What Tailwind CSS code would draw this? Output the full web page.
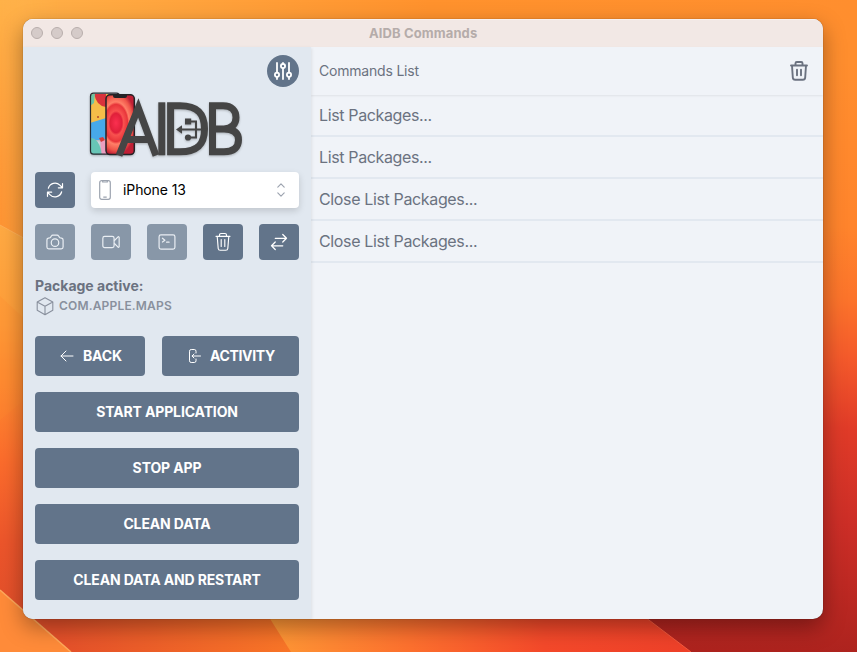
<!DOCTYPE html>
<html lang="en"><head><meta charset="utf-8"><title>AIDB Commands</title>
<script src="https://cdn.jsdelivr.net/npm/@tailwindcss/browser@4"></script></head>
<body class="relative h-[652px] w-[857px] overflow-hidden bg-[#ff8c2c] font-['Inter','Liberation_Sans',sans-serif]">
<!-- wallpaper -->
<svg class="absolute inset-0" width="857" height="652" viewBox="0 0 857 652">
<defs>
<linearGradient id="top" x1="0" y1="0" x2="1" y2="0"><stop offset="0" stop-color="#ffb149"/><stop offset=".5" stop-color="#ff922d"/><stop offset="1" stop-color="#ff8e2e"/></linearGradient>
<linearGradient id="left" x1="0" y1="0" x2="0" y2="1"><stop offset="0" stop-color="#ffb149"/><stop offset=".5" stop-color="#ff9a38"/><stop offset="1" stop-color="#ff8a2c"/></linearGradient>
<linearGradient id="fade" x1="0" y1="0" x2="1" y2="0"><stop offset="0" stop-color="#fff"/><stop offset="1" stop-color="#000"/></linearGradient>
<mask id="leftMask"><rect width="60" height="330" fill="url(#fade)"/></mask>
<linearGradient id="left2" gradientUnits="userSpaceOnUse" x1="0" y1="225" x2="0" y2="600"><stop offset="0" stop-color="#ffaa43"/><stop offset=".25" stop-color="#ff9e39"/><stop offset=".42" stop-color="#ff8a30"/><stop offset=".62" stop-color="#fc6d2c"/><stop offset=".85" stop-color="#ec552b"/><stop offset="1" stop-color="#e4502a"/></linearGradient>
<linearGradient id="right" gradientUnits="userSpaceOnUse" x1="820" y1="60" x2="794" y2="652"><stop offset="0" stop-color="#ff8e2e"/><stop offset=".28" stop-color="#ff842c"/><stop offset=".4" stop-color="#fc742b"/><stop offset=".5" stop-color="#f45a2b"/><stop offset=".62" stop-color="#e03b28"/><stop offset=".78" stop-color="#cc2e27"/><stop offset="1" stop-color="#ad231e"/></linearGradient>
<linearGradient id="b1" x1="0" y1="0" x2="1" y2="0"><stop offset="0" stop-color="#e4502a"/><stop offset=".2" stop-color="#e4502a"/><stop offset="1" stop-color="#fa7727"/></linearGradient>
<linearGradient id="b2" x1="0" y1="0" x2="1" y2="0"><stop offset="0" stop-color="#ff9c36"/><stop offset=".35" stop-color="#fd702e"/><stop offset=".65" stop-color="#f4492a"/><stop offset="1" stop-color="#ee4029"/></linearGradient>
<linearGradient id="b3" x1="0" y1="0" x2="0" y2="1"><stop offset="0" stop-color="#b92621"/><stop offset="1" stop-color="#ad231e"/></linearGradient>
</defs>
<rect width="857" height="652" fill="url(#top)"/>
<path d="M0 0H60V330H0Z" fill="url(#left)" mask="url(#leftMask)"/>
<path d="M0 225L60 258V600H0Z" fill="url(#left2)"/>
<path d="M0 225L60 258" stroke="#ffb765" stroke-opacity=".6"/>
<path d="M0 296L60 352V370L0 420Z" fill="#ff8c2f" fill-opacity=".25"/>
<path d="M780 60H857V652H780Z" fill="url(#right)"/>
<path d="M0 600H300V652H0Z" fill="url(#b1)"/>
<path d="M255 595L291 652H700V595Z" fill="url(#b2)"/>
<path d="M620 598L691 652H810V598Z" fill="url(#b3)"/>
<path d="M620 598L691 652" stroke="#f45a3d"/>
<path d="M0 590L71 652H0Z" fill="#ff8b39"/><path d="M0 590L71 652" stroke="#ffa95b" stroke-width="1.5"/>
</svg>
<main class="absolute left-[23px] top-[19px] flex h-[600px] w-[800px] flex-col overflow-hidden rounded-[10px] bg-[#f0f3f8] shadow-[0_0_1px_rgba(0,0,0,.6),0_8px_22px_rgba(0,0,0,.35)]">
<header class="grid h-7 shrink-0 grid-cols-[1fr_auto_1fr] items-center border-t border-[#f8f1ef] bg-[#f2e8e5] px-2 pb-px">
<div class="flex gap-2"><i class="size-3 rounded-full border border-[#b8aeac] bg-[#d5cbc9]"></i><i class="size-3 rounded-full border border-[#b8aeac] bg-[#d5cbc9]"></i><i class="size-3 rounded-full border border-[#b8aeac] bg-[#d5cbc9]"></i></div>
<h1 class="w-[108px] whitespace-nowrap pb-px text-center text-[13px] leading-4 tracking-[.11px] font-bold text-[#b5acaa]">AIDB Commands</h1>
</header>
<div class="flex min-h-0 flex-1">
<aside class="z-10 flex w-72 shrink-0 flex-col bg-[#e1e8f0] px-3 pt-2 shadow-[1px_1px_3px_rgba(0,0,0,.08)]">
<button class="flex size-8 items-center justify-center self-end rounded-full bg-[#62748a] text-white">
<svg width="20" height="20" viewBox="0 0 20 20" fill="none" stroke="currentColor" stroke-width="1.8" stroke-linecap="round"><path d="M4 2v9.7M4 16v2M10 2v1M10 7.3V18M16 2v9.7M16 16v2"/><circle cx="4" cy="13.8" r="2.1"/><circle cx="10" cy="5.1" r="2.1"/><circle cx="16" cy="13.8" r="2.1"/></svg></button>
<svg class="mt-1 ml-[53px] h-[68px] w-[158px] shrink-0 drop-shadow-[0_1px_1px_rgba(0,0,0,.25)]" viewBox="88 91 158 68">
<defs><clipPath id="p1"><rect x="90.6" y="94" width="28" height="60.5" rx="3"/></clipPath><radialGradient id="p2" gradientUnits="userSpaceOnUse" cx="0" cy="0" r="1" gradientTransform="translate(116 123) scale(20 32)"><stop offset="0" stop-color="#fb3050"/><stop offset=".3" stop-color="#e0203a"/><stop offset=".38" stop-color="#f8524f"/><stop offset=".58" stop-color="#e8353a"/><stop offset=".66" stop-color="#ff8068"/><stop offset=".85" stop-color="#f0564a"/><stop offset="1" stop-color="#c01f35"/></radialGradient></defs>
<g clip-path="url(#p1)"><path fill="#f5bd49" d="M90 93h30v30H90z"/><path fill="#d9323c" d="M94 93h12v14q-10-1-12-14"/><path fill="#6bc3a4" d="M90 93h5l-1 10-4 3z"/><path fill="#47a9e9" d="M90 123l16-5v22H90z"/><path fill="#68c5b6" d="M90 138q9-1 12 17H90z"/><path fill="#eb9fc1" d="M100 139h8v17h-6z"/><circle cx="98" cy="117" r="1" fill="#b54929"/><path fill="#d23d3c" d="M99 138l4-1 2 3-4 2z"/></g>
<rect x="90.5" y="93.2" width="29" height="61" rx="3" fill="none" stroke="#292b31" stroke-width="1.2"/>
<rect x="106" y="94.8" width="28.3" height="59.8" rx="4" fill="url(#p2)" stroke="#242226" stroke-width="1.5"/><path d="M113 95h14v1q0 2-2 2h-10q-2 0-2-2z" fill="#242226"/>
<g fill="none" stroke="#454545" stroke-width="7"><path d="M119 155.5L138.3 108L156 155.5M125 139.5H151" stroke-linejoin="miter"/><path d="M161.8 102.3V155.3"/><path d="M170.6 105.8V151.8H180C199 151.8 204.5 143 204.5 129S199 105.8 180 105.8H170.6Z"/><path d="M212.5 105.8V151.8H224C234.5 151.8 238.5 146.5 238.5 140S234.5 129 224 129H213M224 129C232 128.5 236 124 236 117.5S232 105.8 223 105.8H209M209 151.8H224"/></g>
<g fill="none" stroke="#454545" stroke-width="2"><path d="M181 129.5H207M188 121.5H196V129.5M188 137.5H196V129.5"/></g><g fill="#454545"><path d="M176 129.5l6-4.2v8.4z"/><path d="M185 118.5h6.2v6H185z"/><circle cx="188" cy="137.5" r="3.1"/></g>
</svg>
<div class="mt-[13px] flex h-9 shrink-0 gap-4">
<button class="flex w-10 items-center justify-center rounded-[4px] bg-[#62748a] text-white"><svg width="20" height="20" viewBox="0 0 24 24" fill="none" stroke="currentColor" stroke-width="1.45" stroke-linecap="round" stroke-linejoin="round"><path d="M16.023 9.348h4.992V4.356M2.985 19.644v-4.992h4.992m-4.992 0 3.181 3.183a8.25 8.25 0 0 0 13.803-3.7M4.031 9.865a8.25 8.25 0 0 1 13.803-3.7l3.181 3.182"/></svg></button>
<div class="flex flex-1 items-center rounded-[4px] bg-white shadow-[0_3px_7px_rgba(0,0,0,.15)]">
<svg class="ml-2" width="12" height="20" viewBox="0 0 12 20" fill="none" stroke="#9ca3af" stroke-width="1.2"><rect x=".7" y=".7" width="10.6" height="18.6" rx="2"/><path d="M3.7 1v1h4.6V1M4.3 17.2h3.4"/></svg>
<span class="ml-3 w-[63px] whitespace-nowrap text-[14px] leading-5 tracking-[-.1px] text-black">iPhone 13</span>
<svg class="ml-auto mr-2" width="20" height="20" viewBox="0 0 20 20" fill="none" stroke="#9ca3af" stroke-width="1.15" stroke-linecap="round" stroke-linejoin="round"><path d="m6.8 7.2 3.2-3.3 3.2 3.3M6.8 12.8l3.2 3.3 3.2-3.3"/></svg></div></div>
<div class="mt-4 flex h-9 shrink-0 justify-between text-white">
<button class="flex w-10 items-center justify-center rounded-[4px] bg-[#8897a8]"><svg width="20" height="20" viewBox="0 0 24 24" fill="none" stroke="#e9eef3" stroke-width="1.45" stroke-linejoin="round"><path d="M6.8 6.2A2.3 2.3 0 0 1 5.2 7.2l-1.2.2a2.2 2.2 0 0 0-1.7 2.2V18a2.2 2.2 0 0 0 2.2 2.2h15a2.2 2.2 0 0 0 2.2-2.2V9.6a2.2 2.2 0 0 0-1.8-2.2l-1.1-.2a2.3 2.3 0 0 1-1.6-1l-.9-1.4a2.2 2.2 0 0 0-1.7-1 49 49 0 0 0-5.2 0 2.2 2.2 0 0 0-1.7 1z"/><circle cx="12" cy="12.8" r="4.5"/><path d="M18.5 10.5h.1"/></svg></button>
<button class="flex w-10 items-center justify-center rounded-[4px] bg-[#8897a8]"><svg width="20" height="20" viewBox="0 0 24 24" fill="none" stroke="#e9eef3" stroke-width="1.45" stroke-linejoin="round"><path d="m15.8 10.5 4.7-4.7a.8.8 0 0 1 1.3.5v11.4a.8.8 0 0 1-1.3.5l-4.7-4.7"/><rect x="2.2" y="5.2" width="13.5" height="13.5" rx="2.2"/></svg></button>
<button class="flex w-10 items-center justify-center rounded-[4px] bg-[#8897a8]"><svg width="20" height="20" viewBox="0 0 24 24" fill="none" stroke="#e9eef3" stroke-width="1.45" stroke-linecap="round" stroke-linejoin="round"><rect x="2.5" y="3.5" width="19" height="17" rx="2.2"/><path d="m6.5 7.5 3 2.3-3 2.2M11.5 12.2h3"/></svg></button>
<button class="flex w-10 items-center justify-center rounded-[4px] bg-[#62748a]"><svg width="20" height="20" viewBox="0 0 20 20" fill="none" stroke="currentColor" stroke-width="1.15" stroke-linecap="round" stroke-linejoin="round"><path d="M3 4.3h14M4.2 4.3l1 12.2q.2 1.7 2 1.7h5.6q1.8 0 2-1.7l1-12.2M6.5 4V3q0-1.5 1.5-1.5h4q1.5 0 1.5 1.5v1M8.2 7.5v7M11.8 7.5v7"/></svg></button>
<button class="flex w-10 items-center justify-center rounded-[4px] bg-[#62748a]"><svg width="20" height="20" viewBox="0 0 24 24" fill="none" stroke="currentColor" stroke-width="1.5" stroke-linecap="round" stroke-linejoin="round"><path d="M7.5 21 3 16.5m0 0L7.5 12M3 16.5h13.5m0-13.5L21 7.5m0 0L16.5 12M21 7.5H7.5"/></svg></button>
</div>
<section class="mt-4 h-[44px] shrink-0"><h2 class="text-[14px] leading-5 font-bold text-[#6b7280]"><span class="inline-block w-[109px] whitespace-nowrap">Package active:</span></h2>
<div class="flex items-center gap-1 text-[12px] leading-5 font-semibold tracking-[.18px] text-[#89909d]"><svg width="20" height="20" viewBox="0 0 20 20" fill="none" stroke="#89909d" stroke-width="1.1" stroke-linejoin="round"><path d="m10 1.8 7.8 4.3v8.2L10 18.7l-7.8-4.4V6.1zM2.2 6.1 10 10.3l7.8-4.2M10 10.3v8.4"/></svg><span>COM.APPLE.MAPS</span></div></section>
<div class="mt-4 flex h-10 shrink-0 justify-between text-[14px] font-bold text-white">
<button class="flex w-[110px] items-center rounded-[4px] bg-[#62748a] pl-6"><svg width="16" height="16" viewBox="0 0 16 16" fill="none" stroke="currentColor" stroke-linecap="round" stroke-linejoin="round"><path d="M7 3 2 8l5 5M2 8h12"/></svg><span class="ml-2 pb-0.5 tracking-[-.2px]">BACK</span></button>
<button class="flex w-[137px] items-center rounded-[4px] bg-[#62748a] pl-6"><svg width="16" height="16" viewBox="0 0 16 16" fill="none" stroke="currentColor" stroke-linecap="round" stroke-linejoin="round"><path d="M10 5V3.2Q10 1.5 8.3 1.5H5.2Q3.5 1.5 3.5 3.2v9.6q0 1.7 1.7 1.7h3.1q1.7 0 1.7-1.7V11M14.5 8H6.2M8 6 6 8l2 2"/></svg><span class="ml-2 pb-0.5 tracking-[-.35px]">ACTIVITY</span></button></div>
<div class="mt-4 flex flex-col gap-4 text-[14px] font-bold tracking-[-.13px] text-white">
<button class="h-10 rounded-[4px] bg-[#62748a] pb-0.5">START APPLICATION</button>
<button class="h-10 rounded-[4px] bg-[#62748a] pb-0.5">STOP APP</button>
<button class="h-10 rounded-[4px] bg-[#62748a] pb-0.5">CLEAN DATA</button>
<button class="h-10 rounded-[4px] bg-[#62748a] pb-0.5">CLEAN DATA AND RESTART</button></div>
</aside>
<section class="flex flex-1 flex-col text-[#6b7280]">
<div class="flex h-12 shrink-0 items-center justify-between pl-2 pr-3 text-[14px] shadow-[0_1px_2px_rgba(0,0,0,.07)]"><h2 class="pb-0.5 tracking-[-.2px]">Commands List</h2><svg width="24" height="24" viewBox="0 0 24 24" fill="none" stroke="currentColor" stroke-width="1.9" stroke-linecap="round" stroke-linejoin="round"><path d="M4 6.5h16M5 6.5l.8 12q.2 2.3 2.4 2.3h7.6q2.2 0 2.4-2.3l.8-12M8.5 6V4.2Q8.5 3 9.8 3h4.4q1.3 0 1.3 1.2V6M10 10.8v5.5M14 10.8v5.5"/></svg></div>
<ul class="text-[16px] leading-10 tracking-[-.36px]"><li class="h-[42px] border-b-2 border-[#e2e8f0] pl-2">List Packages...</li><li class="h-[42px] border-b-2 border-[#e2e8f0] pl-2">List Packages...</li><li class="h-[42px] border-b-2 border-[#e2e8f0] pl-2">Close List Packages...</li><li class="h-[42px] border-b-2 border-[#e2e8f0] pl-2">Close List Packages...</li></ul>
</section></div></main></body></html>
